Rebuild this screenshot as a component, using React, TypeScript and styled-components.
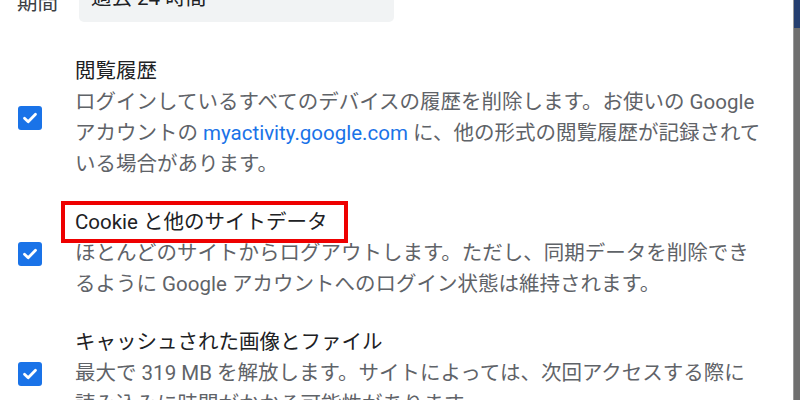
import React from "react";
import styled, { createGlobalStyle } from "styled-components";

const Global = createGlobalStyle`
  html, body { margin: 0; padding: 0; background: #ffffff; }
  body { width: 800px; height: 400px; overflow: hidden; }
  #root { width: 800px; height: 400px; }
`;

const Frame = styled.div`
  display: flex;
  width: 800px;
  height: 400px;
  overflow: hidden;
  font-family: Roboto, "Noto Sans CJK JP", sans-serif;
`;

const Dialog = styled.div`
  flex: 1;
  background: #ffffff;
  display: flex;
  flex-direction: column;
`;

const Edge = styled.div`
  width: 6px;
  display: flex;
  flex-direction: column;
  background: #6f6f6f;
  border-left: 1px solid #9a9a9a;
`;

const EdgeTop = styled.div`
  height: 28px;
  background: #253f70;
`;

const PeriodRow = styled.div`
  display: flex;
  align-items: center;
  gap: 21px;
  margin-top: -22px;
  padding-left: 17px;
  height: 44px;
`;

const PeriodLabel = styled.span`
  font-size: 20.5px;
  line-height: 31px;
  color: #3c4043;
  margin-top: 6px;
`;

const Select = styled.div`
  width: 315px;
  height: 44px;
  box-sizing: border-box;
  background: #f1f3f4;
  border-radius: 5px;
  display: flex;
  align-items: center;
  justify-content: space-between;
  padding: 0 14px 0 12px;
  font-size: 20.5px;
  color: #202124;
`;

const SelectText = styled.span`
  margin-top: -8px;
`;

const Caret = styled.svg`
  width: 12px;
  height: 12px;
  margin-top: -14px;
`;

const List = styled.div`
  display: flex;
  flex-direction: column;
  gap: 27px;
  padding-top: 34px;
`;

const Row = styled.div`
  display: flex;
  align-items: center;
  gap: 33px;
  padding-left: 18px;
`;

const Box = styled.div`
  width: 24px;
  height: 24px;
  flex: none;
  border-radius: 3px;
  background: #1a73e8;
  display: flex;
  align-items: center;
  justify-content: center;
`;

const Texts = styled.div`
  display: flex;
  flex-direction: column;
  font-size: 20.5px;
  line-height: 31px;
`;

const Title = styled.div<{ $marked?: boolean }>`
  position: relative;
  color: #202124;
  white-space: nowrap;
  ${(p) =>
    p.$marked &&
    `
    &::after {
      content: "";
      position: absolute;
      left: -14px;
      top: -6px;
      width: 287px;
      height: 42px;
      box-sizing: border-box;
      border: 4px solid #ee0000;
    }
  `}
`;

const Desc = styled.div`
  color: #5f6368;
  white-space: nowrap;
`;

const Link = styled.span`
  color: #1a73e8;
`;

const Check = () => (
  <Box>
    <svg width="18" height="18" viewBox="0 0 18 18">
      <path
        d="M3.5 9.2 L7.2 12.8 L14.5 5.2"
        fill="none"
        stroke="#ffffff"
        strokeWidth="2.8"
        strokeLinecap="round"
        strokeLinejoin="round"
      />
    </svg>
  </Box>
);

export default function App() {
  return (
    <>
      <Global />
      <Frame>
        <Dialog>
          <PeriodRow>
            <PeriodLabel>期間</PeriodLabel>
            <Select>
              <SelectText>過去 24 時間</SelectText>
              <Caret viewBox="0 0 12 12">
                <path d="M2 4 L6 8 L10 4 Z" fill="#5f6368" />
              </Caret>
            </Select>
          </PeriodRow>
          <List>
            <Row>
              <Check />
              <Texts>
                <Title>閲覧履歴</Title>
                <Desc>
                  ログインしているすべてのデバイスの履歴を削除します。お使いの Google
                  <br />
                  アカウントの <Link>myactivity.google.com</Link> に、他の形式の閲覧履歴が記録されて
                  <br />
                  いる場合があります。
                </Desc>
              </Texts>
            </Row>
            <Row>
              <Check />
              <Texts>
                <Title $marked>Cookie と他のサイトデータ</Title>
                <Desc>
                  ほとんどのサイトからログアウトします。ただし、同期データを削除でき
                  <br />
                  るように Google アカウントへのログイン状態は維持されます。
                </Desc>
              </Texts>
            </Row>
            <Row>
              <Check />
              <Texts>
                <Title>キャッシュされた画像とファイル</Title>
                <Desc>
                  最大で 319 MB を解放します。サイトによっては、次回アクセスする際に
                  <br />
                  読み込みに時間がかかる可能性があります。
                </Desc>
              </Texts>
            </Row>
          </List>
        </Dialog>
        <Edge>
          <EdgeTop />
        </Edge>
      </Frame>
    </>
  );
}
